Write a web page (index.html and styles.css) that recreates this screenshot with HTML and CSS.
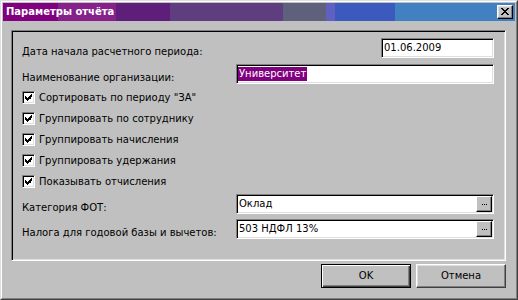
FILE: index.html
```html
<!DOCTYPE html>
<html lang="ru">
<head>
<meta charset="utf-8">
<title>Параметры отчёта</title>
<link rel="stylesheet" href="styles.css">
</head>
<body>
<div class="window">
  <div class="frame">
    <div class="titlebar">
      <span class="title">Параметры отчёта</span>
      <div class="close">
        <svg width="8" height="7" viewBox="0 0 8 7" shape-rendering="crispEdges">
          <path d="M0 0h2v1H0zM6 0h2v1H6zM1 1h2v1H1zM5 1h2v1H5zM2 2h4v1H2zM3 3h2v1H3zM2 4h4v1H2zM1 5h2v1H1zM5 5h2v1H5zM0 6h2v1H0zM6 6h2v1H6z" fill="#000"/>
        </svg>
      </div>
    </div>
    <div class="body">
      <div class="panel">
        <div class="field-row r-date">
          <span class="lbl">Дата начала расчетного периода:</span>
          <div class="edit date"><span class="txt">01.06.2009</span></div>
        </div>
        <div class="field-row r-org">
          <span class="lbl">Наименование организации:</span>
          <div class="edit wide"><span class="sel">Университет</span></div>
        </div>
        <div class="checks">
          <div class="check-row"><span class="cb"><svg width="7" height="7" viewBox="0 0 7 7" shape-rendering="crispEdges"><path d="M6 0h1v3H6zM5 1h1v4H5zM4 2h1v3H4zM3 3h1v3H3zM2 4h1v3H2zM1 3h1v3H1zM0 2h1v3H0z" fill="#000"/></svg></span><span class="clbl">Сортировать по периоду "ЗА"</span></div>
          <div class="check-row"><span class="cb"><svg width="7" height="7" viewBox="0 0 7 7" shape-rendering="crispEdges"><path d="M6 0h1v3H6zM5 1h1v4H5zM4 2h1v3H4zM3 3h1v3H3zM2 4h1v3H2zM1 3h1v3H1zM0 2h1v3H0z" fill="#000"/></svg></span><span class="clbl">Группировать по сотруднику</span></div>
          <div class="check-row"><span class="cb"><svg width="7" height="7" viewBox="0 0 7 7" shape-rendering="crispEdges"><path d="M6 0h1v3H6zM5 1h1v4H5zM4 2h1v3H4zM3 3h1v3H3zM2 4h1v3H2zM1 3h1v3H1zM0 2h1v3H0z" fill="#000"/></svg></span><span class="clbl">Группировать начисления</span></div>
          <div class="check-row"><span class="cb"><svg width="7" height="7" viewBox="0 0 7 7" shape-rendering="crispEdges"><path d="M6 0h1v3H6zM5 1h1v4H5zM4 2h1v3H4zM3 3h1v3H3zM2 4h1v3H2zM1 3h1v3H1zM0 2h1v3H0z" fill="#000"/></svg></span><span class="clbl">Группировать удержания</span></div>
          <div class="check-row"><span class="cb"><svg width="7" height="7" viewBox="0 0 7 7" shape-rendering="crispEdges"><path d="M6 0h1v3H6zM5 1h1v4H5zM4 2h1v3H4zM3 3h1v3H3zM2 4h1v3H2zM1 3h1v3H1zM0 2h1v3H0z" fill="#000"/></svg></span><span class="clbl">Показывать отчисления</span></div>
        </div>
        <div class="field-row r-cat">
          <span class="lbl">Категория ФОТ:</span>
          <div class="edit wide"><span class="txt">Оклад</span><span class="ell"><svg width="5" height="1" viewBox="0 0 5 1" shape-rendering="crispEdges"><path d="M0 0h1v1H0zM2 0h1v1H2zM4 0h1v1H4z" fill="#000"/></svg></span></div>
        </div>
        <div class="field-row r-tax">
          <span class="lbl">Налога для годовой базы и вычетов:</span>
          <div class="edit wide"><span class="txt">503 НДФЛ 13%</span><span class="ell"><svg width="5" height="1" viewBox="0 0 5 1" shape-rendering="crispEdges"><path d="M0 0h1v1H0zM2 0h1v1H2zM4 0h1v1H4z" fill="#000"/></svg></span></div>
        </div>
      </div>
      <div class="buttons">
        <div class="btn default">OK</div>
        <div class="btn">Отмена</div>
      </div>
    </div>
  </div>
</div>
</body>
</html>
```
FILE: styles.css
```css
html, body {
  margin: 0;
  padding: 0;
  background: #c0c0c0;
}
body {
  font-family: "DejaVu Sans", "Liberation Sans", sans-serif;
  font-size: 10px;
  color: #000;
}
.window {
  width: 518px;
  height: 300px;
  box-sizing: border-box;
  border: 1px solid;
  border-color: #dfdfdf #404040 #404040 #dfdfdf;
  background: #c0c0c0;
}
.frame {
  height: 100%;
  box-sizing: border-box;
  border: 1px solid;
  border-color: #fff #808080 #808080 #fff;
  padding: 1px;
  display: flex;
  flex-direction: column;
}
.titlebar {
  height: 18px;
  display: flex;
  align-items: center;
  justify-content: space-between;
  background: linear-gradient(to right,
    #800080 0px, #800080 55px,
    #86208a 55px, #86208a 113px,
    #5f1e7a 113px, #5f1e7a 167px,
    #5f3e7f 167px, #5f3e7f 280px,
    #5f607c 280px, #5f607c 323px,
    #6060c0 323px, #6060c0 332px,
    #3c5abe 332px, #3c5abe 392px,
    #4181c1 392px, #4181c1 100%);
}
.title {
  color: #fff;
  font-weight: bold;
  font-size: 10px;
  line-height: 12px;
  padding-left: 3px;
}
.close {
  width: 16px;
  height: 14px;
  box-sizing: border-box;
  margin-right: 2px;
  background: #c0c0c0;
  border: 1px solid;
  border-color: #fff #000 #000 #fff;
  box-shadow: inset -1px -1px #808080, inset 1px 1px #dfdfdf;
  display: flex;
  align-items: center;
  justify-content: center;
  padding-bottom: 1px;
}
.close svg { display: block; }
.body {
  flex: 1;
  padding: 9px 9px 9px 8px;
  display: flex;
  flex-direction: column;
}
.panel {
  height: 231px;
  box-sizing: border-box;
  border: 1px solid;
  border-color: #808080 #fff #fff #808080;
  box-shadow: inset 1px 1px #000, inset -1px -1px #dfdfdf;
  padding: 7px 11px 0 10px;
  display: flex;
  flex-direction: column;
}
.field-row {
  display: grid;
  grid-template-columns: 214px 258px;
  height: 20px;
}
.r-org { margin-top: 6px; }
.r-cat { margin-top: 2px; }
.r-tax { margin-top: 5px; }
.lbl {
  line-height: 12px;
  padding-top: 8px;
  white-space: nowrap;
}
.edit {
  height: 20px;
  box-sizing: border-box;
  border: 1px solid;
  border-color: #808080 #fff #fff #808080;
  box-shadow: inset 1px 1px #000, inset -1px -1px #dfdfdf;
  background: #fff;
  padding: 1px;
  display: flex;
  align-items: center;
}
.date {
  width: 113px;
  justify-self: end;
}
.txt {
  line-height: 14px;
  padding-left: 1px;
  white-space: nowrap;
}
.sel {
  background: #800080;
  color: #fff;
  line-height: 14px;
  padding: 0 1px;
  white-space: nowrap;
}
.ell {
  margin-left: auto;
  width: 16px;
  height: 16px;
  box-sizing: border-box;
  background: #c0c0c0;
  border: 1px solid;
  border-color: #fff #000 #000 #fff;
  box-shadow: inset -1px -1px #808080;
  display: flex;
  align-items: center;
  justify-content: center;
}
.ell svg { display: block; }
.checks {
  margin-top: 3px;
  display: flex;
  flex-direction: column;
}
.check-row {
  height: 21px;
  display: flex;
  align-items: center;
  gap: 4px;
}
.cb {
  width: 13px;
  height: 13px;
  box-sizing: border-box;
  border: 1px solid;
  border-color: #808080 #fff #fff #808080;
  box-shadow: inset 1px 1px #000, inset -1px -1px #dfdfdf;
  background: #fff;
  display: flex;
  align-items: center;
  justify-content: center;
}
.cb svg { display: block; }
.clbl {
  line-height: 12px;
  white-space: nowrap;
}
.buttons {
  margin-top: 3px;
  display: flex;
  justify-content: flex-end;
  gap: 5px;
}
.btn {
  width: 90px;
  height: 24px;
  box-sizing: border-box;
  border: 1px solid;
  border-color: #fff #404040 #404040 #fff;
  box-shadow: inset -1px -1px #808080, inset 1px 1px #dfdfdf;
  display: flex;
  align-items: center;
  justify-content: center;
  line-height: 12px;
}
.btn.default {
  border-color: #000;
  box-shadow: inset 1px 1px #fff, inset -1px -1px #404040, inset -2px -2px #808080;
}
```
